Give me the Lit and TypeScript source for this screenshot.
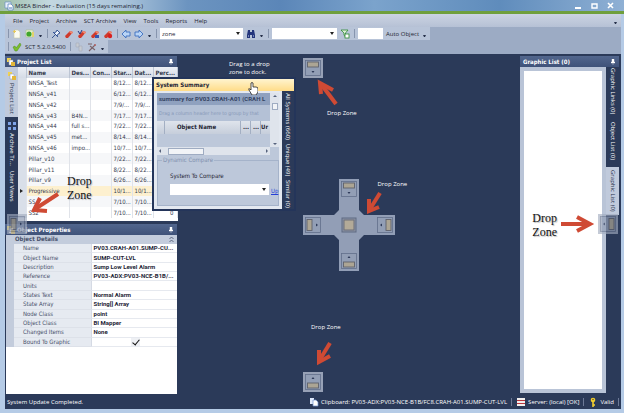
import { LitElement, html, css, svg, nothing } from "lit";
import { customElement, property } from "lit/decorators.js";

type Side = "top" | "bottom" | "left" | "right" | "center";

const projects: string[][] = [
  ["NNSA_Test", "", "8/12...", "8/12...", ""],
  ["NNSA_v41", "", "6/12...", "6/12...", ""],
  ["NNSA_v42", "", "7/9/...", "7/9/...", ""],
  ["NNSA_v43", "B4N...", "7/17...", "7/17...", ""],
  ["NNSA_v44", "full s...", "7/22...", "7/22...", ""],
  ["NNSA_v45", "met...", "8/14...", "8/14...", ""],
  ["NNSA_v46", "impo...", "10/7...", "10/7...", ""],
  ["Pillar_v10", "", "7/22...", "7/22...", ""],
  ["Pillar_v11", "", "8/22...", "8/22...", ""],
  ["Pillar_v9", "", "6/26...", "6/26...", ""],
  ["Progressive", "", "10/1...", "10/1...", ""],
  ["SS", "", "7/10...", "7/10...", ""],
  ["SS2", "", "7/10...", "7/10...", "0"],
];

const details: [string, string][] = [
  ["Name", "PV03.CRAH-A01.SUMP-CU..."],
  ["Object Name", "SUMP-CUT-LVL"],
  ["Description", "Sump Low Level Alarm"],
  ["Reference", "PV03-ADX:PV03-NCE-B1B/..."],
  ["Units", ""],
  ["States Text", "Normal Alarm"],
  ["State Array", "String[] Array"],
  ["Node Class", "point"],
  ["Object Class", "BI Mapper"],
  ["Changed Items", "None"],
];

const icon = (body: unknown) =>
  html`<svg width="10" height="10" viewBox="0 0 10 10" aria-hidden="true">${body}</svg>`;

const eraser = (extra: unknown) =>
  icon(svg`<path d="M1 7 6 2 9 3 4 9 2 9Z" fill="#cf3a2c"/><path d="M6 2 9 3 8 5 5 3Z" fill="#f08a70"/>${extra}`);

const icons = {
  doc: icon(svg`<path d="M2 1h4l2 2v6H2z" fill="#fbfbf2" stroke="#c8c9a8" stroke-width=".6"/><path d="M1 2.500h3M2.500 1v3" stroke="#e8c95a"/>`),
  open: icon(svg`<path d="M1 1h7v7H1z" fill="#e4efcf" stroke="#a9bf8a" stroke-width=".6"/><circle cx="4" cy="5" r="2.600" fill="#3fa52c"/><path d="M7 3h2v5H7z" fill="#e3d36c"/>`),
  pin: icon(svg`<path d="M6 1 9 4 7 5 6 7 3 4 5 3Z" fill="#eef3fb" stroke="#27488c" stroke-width=".9"/><path d="M4.500 5.500 1 9M2 3l5 5" stroke="#27488c" stroke-width=".9"/>`),
  back: icon(svg`<path d="M1 5 5 1v2h4v4H5v2Z" fill="#b9d4f6" stroke="#3c6fc0" stroke-width=".9"/>`),
  next: icon(svg`<path d="M9 5 5 1v2H1v4h4v2Z" fill="#b9d4f6" stroke="#3c6fc0" stroke-width=".9"/>`),
  find: icon(svg`<path d="M2 1h2v2h2V1h2l1 5v3H6V6H4v3H1V6Z" fill="#23357c"/><path d="M2 7h1M7 7h1" stroke="#c6d2ef"/>`),
  filter: icon(svg`<path d="M1 1h7L5.500 4v4L4 6V4Z" fill="#dff0d8" stroke="#2d8a34" stroke-width=".8"/><rect x="5" y="5" width="4" height="4" fill="#fff" stroke="#2d8a34" stroke-width=".8"/>`),
  check: icon(svg`<path d="M1 5 3 4 4 6 8 1 9 3 5 9 3 9Z" fill="#7cbf2c" stroke="#4c8d1c" stroke-width=".5"/>`),
  copy: icon(svg`<path d="M2 1h3v4H2zM5 4h3v5H5z" fill="#c6cbd2" stroke="#a5acb8" stroke-width=".6"/>`),
  cut: icon(svg`<path d="M1 2h4M2 9l6-6M3 4l5 4" stroke="#7a6268" stroke-width="1.100"/><circle cx="8" cy="3" r="1" fill="#b06060"/>`),
  app: icon(svg`<path d="M1 1h6v6H1z" fill="#e8f0fa" stroke="#6a8fc0" stroke-width=".7"/><path d="M4 3h3l2 2v4H4z" fill="#fff" stroke="#4b79b8" stroke-width=".7"/><path d="M5 7h3" stroke="#4b79b8"/>`),
  project: icon(svg`<path d="M1 1h4v4H1z" fill="#f2d34f"/><path d="M3 3h4v5H3z" fill="#fff" stroke="#8d97ab" stroke-width=".5"/><path d="M5 5h4v4H5z" fill="#e3b73a"/>`),
  archive: icon(svg`<path d="M1 1h3v3H1zM6 1h3v3H6zM1 6h3v3H1zM6 6h3v3H6z" fill="#7fa4e8"/>`),
  clip: icon(svg`<path d="M1 1h4v6H1z" fill="#dfe9fb"/><path d="M4 3h3l2 2v4H4z" fill="#fff" stroke="#6f93d0" stroke-width=".7"/>`),
  server: icon(svg`<path d="M1 1h8v2H1zM1 4h8v2H1zM1 7h8v2H1z" fill="#f1eeee"/><path d="M1 3.500h8M1 6.500h8" stroke="#b8343c"/>`),
  key: icon(svg`<circle cx="5" cy="3" r="2.300" fill="#f3cf30"/><circle cx="5" cy="2.500" r=".8" fill="#6b5a20"/><path d="M5 5v5M5 8h2" stroke="#f3cf30" stroke-width="1.600"/>`),
};

@customElement("dock-target")
class DockTarget extends LitElement {
  @property() side: Side = "top";
  @property({ type: Boolean }) bare = false;

  static styles = css`
    :host { display: block; width: 20px; height: 20px; }
    button { display: block; width: 20px; height: 20px; padding: 0; border: 0; background: none; }
    svg { display: block; }
    .left { transform: rotate(-90deg); }
    .right { transform: rotate(90deg); }
    .bottom { transform: rotate(180deg); }
  `;

  render() {
    return html`<button aria-label="Dock ${this.side}">
      <svg class=${this.side} width="20" height="20" viewBox="0 0 20 20">
        ${this.bare ? nothing : svg`<rect width="20" height="20" fill="#a3adc0" fill-opacity=".9"/>`}
        ${this.side === "center"
          ? svg`<rect x="3" y="3" width="14" height="14" fill="#8b93a6" stroke="#5f6a82"/><rect x="5" y="5" width="10" height="10" fill="#b3aa98" stroke="#6c6f78"/>`
          : svg`<rect x="2.500" y="2.500" width="15" height="15" fill="#929eb5" stroke="#626f8b" stroke-width=".8"/>
              <rect x="4.500" y="4" width="11" height="5" fill="#aca594" stroke="#5f626c" stroke-width=".9"/>
              <path d="M8.500 13h3l-1.500 2z" fill="#2d3a58"/>`}
      </svg>
    </button>`;
  }
}

@customElement("app-root")
class AppRoot extends LitElement {
  static styles = css`
    :host {
      display: block;
      height: 100vh;
      font: 6px/8px "Open Sans", "Noto Sans", sans-serif;
      color: #1e2432;
    }
    * { box-sizing: border-box; }
    svg { display: block; flex: none; }
    button, select, input { font: inherit; color: inherit; margin: 0; padding: 0; border: 0; background: none; border-radius: 0; }
    .window {
      height: 100%;
      display: grid;
      grid-template-rows: 14px 13px 27px minmax(0, 1fr) 15px;
      padding: 0 3px 4px 5px;
      background: #b5cbe6;
    }
    .title {
      margin: 0 -3px 0 -5px;
      padding: 0 9px 0 4px;
      display: flex;
      align-items: center;
      gap: 1px;
      border-bottom: 3px solid #6f9f3c;
      background: linear-gradient(90deg, #9fbfa8 0, #c3d8e0 8%, #a9c3da 20%, #6c94c0 30%, #5b86b8 45%, #7ba3cc 60%, #5f8cbc 80%, #8fb0d4 100%);
    }
    .title h1 { flex: 1; margin: 0; font-weight: 400; font-size: 6px; white-space: nowrap; }
    .title .buttons { display: flex; gap: 6px; color: #fff; }
    .menu { display: flex; align-items: center; gap: 7px; padding: 0 3px 0 8px; background: linear-gradient(#cbd3e2, #b6c1d5); }
    .menu .more { margin-left: auto; }
    .bars { background: #9cabc4; }
    .bar { width: max-content; height: 13px; display: flex; align-items: center; gap: 3px; padding: 0 3px; background: #b8c4d8; }
    .grip { width: 1px; height: 9px; background: #8795ae; }
    .bar > * + .grip { margin-left: 1px; }
    .more { width: 5px; text-align: center; align-self: end; }
    .bar .more::after, .menu .more::after { content: ""; display: block; margin: 0 1px 2px; border: 1px solid transparent; border-top: 2px solid #26304a; }
    .bar select, .bar input, .combo select { height: 11px; background: #fff; padding: 0 2px; appearance: none; }
    .bar .field { width: 25px; }
    .combo { position: relative; display: block; }
    .combo select { width: 100%; display: block; }
    .combo::after { content: ""; position: absolute; right: 3px; top: 4px; border: 2px solid transparent; border-top: 3px solid #222; border-bottom: 0; }
    .find { width: 83px; }
    .scope { width: 65px; }
    .main {
      position: relative;
      display: grid;
      grid-template-columns: 172px minmax(0, 1fr) 101px;
      padding-top: 2px;
      background: #2b3a59;
    }
    .side { display: flex; flex-direction: column; gap: 3px; min-height: 0; }
    .panel { display: flex; flex-direction: column; min-height: 0; }
    .panel > header {
      height: 11px; flex: none; display: flex; align-items: center; gap: 1px; padding: 0 4px 0 1px;
      background: linear-gradient(#52668d, #3f5279); color: #fff;
    }
    h2 { margin: 0; flex: 1; font: bold 6px/8px "DejaVu Sans Condensed", "DejaVu Sans", sans-serif; white-space: nowrap; }
    .body { display: flex; min-height: 0; }
    .tabs { flex: none; width: 13px; display: flex; flex-direction: column; background: #2b3a59; color: #fff; }
    .tabs button { writing-mode: vertical-rl; display: flex; align-items: center; gap: 2px; padding: 4px 2px; white-space: nowrap; }
    .tabs button[aria-selected="true"] { background: #c0cadc; color: #26304a; }
    .projects .tabs button { padding: 4px 1px; height: 50px; }
    .rows { flex: 1; height: 154px; background: #fff; }
    table { border-collapse: collapse; table-layout: fixed; font: 6px/8px "DejaVu Sans Condensed", "DejaVu Sans", sans-serif; }
    th, td { padding: 0 1px 0 2px; text-align: left; white-space: nowrap; overflow: hidden; }
    .list { width: 100%; height: 151px; color: #333a4c; }
    .list th { height: 11px; background: linear-gradient(#eceff5, #d5dbe6); border-right: 1px solid #bcc5d4; }
    .list td { border-right: 1px solid #e0e3e9; }
    .list tr:nth-child(even) td { background: #f6f7f9; }
    .list .current td { background: #fdf0cf; }
    .list tr td:first-child { background: #d9dfe9; padding: 0 1px; }
    .list td:last-child { text-align: right; padding-right: 3px; }
    .marker { display: block; width: 0; border: 2px solid transparent; border-left: 3px solid #222; border-right: 0; margin-left: 1px; }
    .props { flex: 1; }
    .props .sheet { flex: 1; background: #fff; margin: 0 0 0 1px; }
    .props table { width: 100%; height: 103px; color: #47506a; }
    .props caption { height: 9px; padding: 0 3px 0 9px; background: #c3ccdc; font-weight: bold; }
    .props caption div { display: flex; justify-content: space-between; }
    .props th { width: 81px; padding-left: 9px; font-weight: 400; background: #e6eaf1; border-left: 8px solid #c3ccdc; border-bottom: 1px solid #dde1e9; border-right: 1px solid #d5dae4; }
    .props td { padding-right: 0; font-family: Roboto, sans-serif; font-weight: bold; color: #1e2536; border-bottom: 1px solid #e6e9ef; }
    .props input { display: block; appearance: none; width: 9px; height: 8px; margin: 0 auto; background: #eef0f4; }
    .props input:checked::before { content: ""; display: block; width: 3px; height: 6px; margin-left: 3px; border: solid #111; border-width: 0 1px 1px 0; transform: rotate(40deg); }
    .stage { position: relative; }
    .graphics { margin-right: 2px; padding-bottom: 1px; }
    .graphics header { padding-left: 3px; }
    .graphics .body { flex: 1; }
    .graphics .canvas { flex: 1; background: #fff; border: 4px solid #b9c4d7; }
    .graphics .tabs { gap: 2px; }
    .graphics .tabs button { height: 48px; padding: 2px; justify-content: center; }
    .status { display: flex; align-items: center; gap: 4px; padding: 0 2px; background: #2b3a59; color: #fff; white-space: nowrap; }
    .status .grow { flex: 1; }
    .status .rule { width: 1px; height: 8px; background: #6c7997; }
    .status span { display: flex; align-items: center; gap: 2px; }

    .float { position: absolute; left: 147px; top: 23px; width: 144px; height: 134px; display: flex; flex-direction: column; border: 2px solid #24355a; background: #e3e8f0; }
    .float > header { flex: none; height: 12px; padding: 2px; background: linear-gradient(#fff4cf, #ffdc88); color: #1e2536; }
    .float .inner { flex: 1; width: 0; margin: 2px 3px 3px 3px; background: #bdc8da; display: flex; flex-direction: column; overflow: hidden; }
    .float .body { flex: 1; }
    .grid { display: grid; grid-template-columns: minmax(0, 1fr) 9px; grid-template-rows: 54px 8px; font: 6px/8px "DejaVu Sans Condensed", sans-serif; }
    .cells { overflow: hidden; white-space: nowrap; }
    .band { height: 12px; padding: 2px 0 2px 2px; background: #8fa1bf; font-family: Roboto, sans-serif; font-weight: bold; color: #33425f; }
    .hint { height: 16px; padding: 4px 0 4px 2px; font-size: 5px; color: #8798b6; background: #b4c1d6; }
    .cols { height: 13px; display: flex; font-weight: bold; background: linear-gradient(#dfe4ec, #c6cedb); }
    .cols span { flex: none; padding: 2px; border-right: 1px solid #a3afc3; }
    .cols .pad { width: 8px; }
    .cols .name { width: 76px; padding-left: 12px; }
    .cols .dots { width: 10px; }
    .cols .last { padding-right: 0; border: 0; padding-left: 0; }
    .vbar, .hbar { display: flex; align-items: center; justify-content: space-between; background: #dfe4ec; padding: 2px; }
    .vbar { flex-direction: column; }
    .thumb { background: #f2f4f7; border: 1px solid #9facc2; }
    .vbar .thumb { width: 6px; height: 7px; margin-bottom: 28px; }
    .hbar .thumb { width: 36px; height: 7px; margin-right: 56px; }
    .tri { border: 2px solid transparent; width: 0; }
    .tri.u { border-bottom-color: #56627c; border-top: 0; }
    .tri.d { border-top-color: #56627c; border-bottom: 0; }
    .tri.l { border-right-color: #56627c; border-left: 0; }
    .tri.r { border-left-color: #56627c; border-right: 0; }
    fieldset { margin: 1px 0 0; padding: 8px 0 0 12px; border: 1px solid #a5b3ca; flex: 1; min-width: 0; font: 6px/8px "DejaVu Sans Condensed", sans-serif; }
    legend { margin-left: -8px; padding: 0 1px; color: #8090ae; }
    .pick { display: grid; grid-template-columns: 99px auto; gap: 4px 2px; align-items: end; }
    .pick label { grid-column: 1 / 3; }
    .pick a { color: #2440d8; }
    .float .tabs { width: 12px; gap: 0; overflow: hidden; }
    .float .tabs button { padding: 2px; }
    .hand { position: absolute; left: 94px; top: 3px; }

    .zone, .cross, .note { position: absolute; }
    .zone.top { left: 50%; top: 4px; transform: translateX(-50%); }
    .zone.bottom { left: 50%; bottom: 2px; transform: translateX(-50%); }
    .zone.left { left: 2px; top: 50%; transform: translateY(-50%); opacity: .7; }
    .zone.right { right: 3px; top: 50%; transform: translateY(-50%); opacity: .7; }
    .cross { left: 50%; top: 50%; width: 92px; height: 92px; margin: -46px; display: grid; grid-template-columns: 20px 52px 20px; grid-template-rows: 20px 52px 20px; place-items: center; }
    .cross > svg { position: absolute; inset: 0; }
    .cross dock-target { position: relative; }
    .cross .top { grid-area: 1 / 2; }
    .cross .left { grid-area: 2 / 1; }
    .cross .center { grid-area: 2 / 2; }
    .cross .right { grid-area: 2 / 3; }
    .cross .bottom { grid-area: 3 / 2; }
    .note { color: #fff; white-space: nowrap; }
    .note.serif { color: #111; font: 12px/14px "Liberation Serif", serif; text-shadow: 1px 1px 1px #b9b9b9; }
    .arrow { position: absolute; overflow: visible; }
    .n-top { left: calc(50% + 14px); top: 55px; }
    .a-top { left: calc(50% + 5px); top: 26px; }
    .n-bottom { left: calc(50% - 2px); bottom: 63px; }
    .a-bottom { left: calc(50% + 3px); bottom: 28px; }
    .n-left { left: 62px; top: calc(50% - 50px); }
    .a-left { left: 26px; top: calc(50% - 31px); }
    .n-right { right: 64px; top: calc(50% - 13px); }
    .a-right { right: 28px; top: calc(50% - 8px); }
    .n-mid { left: calc(50% + 29px); top: calc(50% - 45px); }
    .a-mid { left: calc(50% + 17px); top: calc(50% - 33px); }
    .n-drag { left: 224px; top: 6px; }
  `;

  private arrow(cls: string, w: number, h: number, shaft: string, head: string) {
    return html`<svg class="arrow ${cls}" width=${w} height=${h} viewBox="0 0 ${w} ${h}" aria-hidden="true">
      <g fill="none" stroke="#cf4a34" stroke-width="4"><path d=${shaft} /><path d=${head} /></g>
    </svg>`;
  }

  private tab(label: string, on = false, pic: unknown = nothing) {
    return html`<button role="tab" aria-selected=${on ? "true" : "false"}>${pic}${label}</button>`;
  }

  private pinIcon() {
    return html`<svg width="4" height="6" viewBox="0 0 4 6" aria-hidden="true"><path d="M1 0h2v3h1v1H0V3h1zM2 4v2" fill="#fff" stroke="#fff" stroke-width=".4"/></svg>`;
  }

  private projectList() {
    const cols = ["", "Name", "Des...", "Con...", "Star...", "Dat...", "Perc..."];
    const widths = [8, 43, 21, 21, 21, 21, 24];
    return html`<section class="panel projects">
      <header>${icons.project}<h2>Project List</h2>${this.pinIcon()}</header>
      <div class="body">
        <div class="tabs" role="tablist">
          ${this.tab("Project List", true, icons.project)}${this.tab("Archive Tr...", false, icons.archive)}${this.tab("User Views")}
        </div>
        <div class="rows">
          <table class="list">
            <colgroup>${widths.map((w) => html`<col width=${w} />`)}</colgroup>
            <thead><tr>${cols.map((c) => html`<th>${c}</th>`)}</tr></thead>
            <tbody>
              ${projects.map(([name, desc, start, date, pct]) => html`<tr class=${name === "Progressive" ? "current" : ""}>
                <td>${name === "Progressive" ? html`<span class="marker"></span>` : nothing}</td>
                <td>${name}</td><td>${desc}</td><td></td><td>${start}</td><td>${date}</td><td>${pct}</td>
              </tr>`)}
            </tbody>
          </table>
        </div>
      </div>
    </section>`;
  }

  private objectProperties() {
    return html`<section class="panel props">
      <header>${icons.project}<h2>Object Properties</h2>${this.pinIcon()}</header>
      <div class="sheet">
        <table>
          <caption><div><span>Object Details</span>
            <svg width="5" height="8" viewBox="0 0 5 8"><path d="M.5 4l2-2 2 2M.5 7l2-2 2 2" fill="none" stroke="#47506a" stroke-width=".8"/></svg></div></caption>
          <tbody>
            ${details.map(([k, v]) => html`<tr><th scope="row">${k}</th><td>${v}</td></tr>`)}
            <tr><th scope="row"><label for="bound">Bound To Graphic</label></th><td><input id="bound" type="checkbox" checked /></td></tr>
          </tbody>
        </table>
      </div>
    </section>`;
  }

  private summary() {
    return html`<section class="float">
      <header><h2>System Summary</h2></header>
      <div class="body">
        <div class="inner">
          <div class="grid">
            <div class="cells">
              <div class="band">summary for PV03.CRAH-A01 (CRAH L</div>
              <div class="hint">Drag a column header here to group by that</div>
              <div class="cols"><span class="pad"></span><span class="name">Object Name</span><span class="dots">...</span><span class="dots">...</span><span class="last">Ur</span></div>
            </div>
            <div class="vbar"><i class="tri u"></i><i class="thumb"></i><i class="tri d"></i></div>
            <div class="hbar"><i class="tri l"></i><i class="thumb"></i><i class="tri r"></i></div>
          </div>
          <fieldset>
            <legend>Dynamic Compare</legend>
            <div class="pick">
              <label for="compare">System To Compare</label>
              <span class="combo"><select id="compare"><option></option></select></span>
              <a href="#update">Up</a>
            </div>
          </fieldset>
        </div>
        <div class="tabs" role="tablist">${this.tab("All Systems (660)")}${this.tab("Unique (49)")}${this.tab("Similar (0)")}</div>
      </div>
      <svg class="hand" width="10" height="13" viewBox="0 0 10 13"><path d="M3 1q1-1 2 0v4h3q2 0 2 2v3l-2 3H4L1 8q-1-2 1-1l1 1z" fill="#fff" stroke="#222" stroke-width=".8"/></svg>
    </section>`;
  }

  render() {
    return html`<div class="window">
      <header class="title">${icons.app}
        <h1>MSEA Binder - Evaluation (15 days remaining.)</h1>
        <div class="buttons">
          <button aria-label="Minimize">${icon(svg`<path d="M2 7h6" stroke="#fff" stroke-width="2"/>`)}</button>
          <button aria-label="Maximize">${icon(svg`<path d="M3 3h5v4H3z" fill="none" stroke="#fff" stroke-width="1.400"/>`)}</button>
          <button aria-label="Close">${icon(svg`<path d="M3 2l5 5M8 2 3 7" stroke="#fff" stroke-width="1.600"/>`)}</button>
        </div>
      </header>
      <nav class="menu">
        ${["File", "Project", "Archive", "SCT Archive", "View", "Tools", "Reports", "Help"].map((m) => html`<button>${m}</button>`)}
        <i class="more"></i>
      </nav>
      <div class="bars">
        <div class="bar">
          <i class="grip"></i><button aria-label="New">${icons.doc}</button><button aria-label="Open">${icons.open}</button><i class="more"></i>
          <i class="grip"></i><button aria-label="Pin">${icons.pin}</button>
          <button aria-label="Clear">${eraser(nothing)}</button>
          <button aria-label="Clear checked">${eraser(svg`<path d="M1 2l2 3 2-4" stroke="#23357c" fill="none"/>`)}</button>
          <button aria-label="Clear selected">${eraser(svg`<path d="M5 6h4v3H5z" fill="#3557b0"/>`)}</button>
          <button aria-label="Clear all">${eraser(svg`<circle cx="7" cy="7" r="2.200" fill="#d81f1f"/>`)}</button>
          <i class="grip"></i><button aria-label="Back">${icons.back}</button><button aria-label="Forward">${icons.next}</button><i class="more"></i>
          <i class="grip"></i>
          <span class="combo find"><select aria-label="Search"><option>zone</option></select></span>
          <button aria-label="Find">${icons.find}</button><i class="more"></i><i class="grip"></i>
          <span class="combo scope"><select aria-label="Filter"><option></option></select></span>
          <button aria-label="Apply filter">${icons.filter}</button><i class="grip"></i>
          <input class="field" aria-label="Object" /><button>Auto Object</button><i class="more"></i>
        </div>
        <div class="bar">
          <i class="grip"></i>${icons.check}<span>SCT 5.2.0.5400</span><i class="grip"></i>
          <button aria-label="Copy">${icons.copy}</button><button aria-label="Cut">${icons.cut}</button><i class="more"></i>
        </div>
      </div>
      <main class="main">
        <div class="side">${this.projectList()}${this.objectProperties()}</div>
        <div class="stage">
          <div class="cross">
            <svg width="92" height="92" viewBox="0 0 92 92"><path d="M36 0h20v31l5 5h31v20H61l-5 5v31H36V61l-5-5H0V36h31l5-5z" fill="#929eb6"/></svg>
            ${(["top", "left", "center", "right", "bottom"] as Side[]).map((s) => html`<dock-target class=${s} side=${s} bare></dock-target>`)}
          </div>
          <span class="note n-mid">Drop Zone</span>
          ${this.arrow("a-mid", 15, 22, "M14 1 4 17", "M3 7V19L13 15")}
        </div>
        <section class="panel graphics">
          <header><h2>Graphic List (0)</h2>${this.pinIcon()}</header>
          <div class="body">
            <div class="canvas"></div>
            <div class="tabs" role="tablist">${this.tab("Graphic Links (0)")}${this.tab("Object List (0)")}${this.tab("Graphic List (0)", true)}</div>
          </div>
        </section>
        <span class="note n-drag">Drag to a drop<br />zone to dock.</span>
        ${this.summary()}
        <dock-target class="zone top" side="top"></dock-target>
        <dock-target class="zone bottom" side="bottom"></dock-target>
        <dock-target class="zone left" side="left"></dock-target>
        <dock-target class="zone right" side="right"></dock-target>
        <span class="note n-top">Drop Zone</span>
        ${this.arrow("a-top", 19, 25, "M18 24 3 4", "M3 14 2 3 15 10")}
        <span class="note n-bottom">Drop Zone</span>
        ${this.arrow("a-bottom", 15, 24, "M14 1 3 19", "M3 8V20L14 14")}
        <span class="note serif n-left">Drop<br />Zone</span>
        ${this.arrow("a-left", 28, 20, "M27 1 4 16", "M9 5 3 17 16 18")}
        <span class="note serif n-right">Drop<br />Zone</span>
        ${this.arrow("a-right", 32, 16, "M0 8H29", "M16 1 29 8 16 15")}
      </main>
      <footer class="status">
        <span>System Update Completed.</span><i class="grow"></i>
        <span>${icons.clip}Clipboard: PV03-ADX:PV03-NCE-B1B/FC8.CRAH-A01.SUMP-CUT-LVL</span><i class="rule"></i>
        <span>${icons.server}Server: (local) [OK]</span><i class="rule"></i>
        <span>${icons.key}Valid</span><i class="rule"></i>
      </footer>
    </div>`;
  }
}
